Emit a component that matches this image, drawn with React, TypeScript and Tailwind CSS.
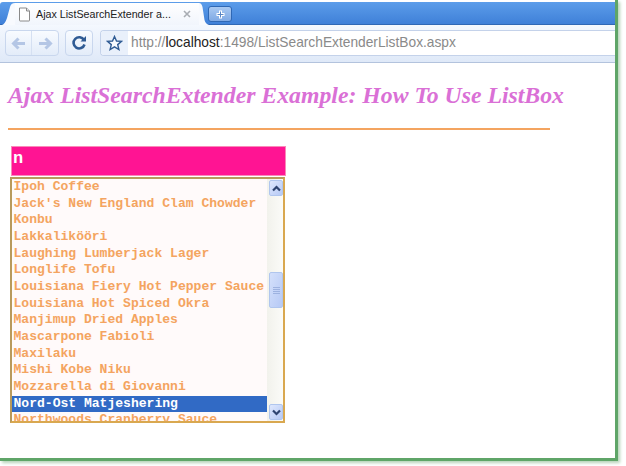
const items = [
  "Ipoh Coffee",
  "Jack's New England Clam Chowder",
  "Konbu",
  "Lakkalikööri",
  "Laughing Lumberjack Lager",
  "Longlife Tofu",
  "Louisiana Fiery Hot Pepper Sauce",
  "Louisiana Hot Spiced Okra",
  "Manjimup Dried Apples",
  "Mascarpone Fabioli",
  "Maxilaku",
  "Mishi Kobe Niku",
  "Mozzarella di Giovanni",
  "Nord-Ost Matjeshering",
  "Northwoods Cranberry Sauce",
];

function Chevron({ up }: { up?: boolean }) {
  return (
    <svg width="9" height="7" viewBox="0 0 9 7" fill="none">
      <path d={up ? "M1 5.5 L4.5 2 L8 5.5" : "M1 1.5 L4.5 5 L8 1.5"} stroke="#2f4470" strokeWidth="2.2" />
    </svg>
  );
}

function ScrollBtn({ up }: { up?: boolean }) {
  return (
    <div className="h-[16px] w-[14px] flex items-center justify-center rounded-[2px] border border-[#b0c6ee] bg-gradient-to-br from-[#dfe8fd] to-[#b6c9f5]">
      <Chevron up={up} />
    </div>
  );
}

export default function App() {
  return (
    <div className="w-[626px] h-[466px] bg-white overflow-hidden font-['Liberation_Sans',sans-serif]">
      <div className="w-[618px] h-[461px] border-r-[3px] border-b-[3px] border-[#5fa568] flex flex-col bg-white shadow-[2px_2px_3px_#b5d3b8]">
        {/* Tab strip */}
        <div className="h-[25px] shrink-0 pt-[2px] bg-white">
          <div className="h-[23px] bg-gradient-to-b from-[#5c9dea] to-[#3f80d8] border-b border-[#2f68b5] flex items-end pl-[2px] rounded-tl-[3px]">
            <svg width="13" height="22" viewBox="0 0 13 22" className="shrink-0 -mb-px">
              <path d="M0 22 Q3 21 5 15 L8 4 Q9 0 13 0 V22 Z" fill="#f8fafe" />
            </svg>
            <div className="w-[184px] h-[22px] bg-gradient-to-b from-white to-[#f1f5fc] flex items-center pl-[3px] pr-[8px] -mb-px">
              <svg width="13" height="15" viewBox="0 0 13 15" fill="none" className="shrink-0">
                <path d="M1.5 1 H8.5 L11.5 4 V13.5 Q11.5 14 11 14 H2 Q1.5 14 1.5 13.5 Z" fill="#fff" stroke="#8a8a8a" />
                <path d="M8.5 1 V4 H11.5" stroke="#8a8a8a" fill="#e8e8e8" />
              </svg>
              <span className="ml-[5px] text-[10.7px] leading-none text-[#222] whitespace-nowrap">Ajax ListSearchExtender a...</span>
              <svg width="8" height="8" viewBox="0 0 8 8" className="ml-auto shrink-0">
                <path d="M1 1 L7 7 M7 1 L1 7" stroke="#a9adb3" strokeWidth="1.6" />
              </svg>
            </div>
            <svg width="10" height="22" viewBox="0 0 10 22" className="shrink-0 -mb-px">
              <path d="M0 0 Q2.5 0 3.5 4 L5.5 17 Q6.5 21 10 22 H0 Z" fill="#f8fafe" />
            </svg>
            <div className="-ml-[1px] mb-[2px] w-[24px] h-[16px] rounded-[3px] bg-gradient-to-b from-[#a9c9f2] to-[#7fa9e4] border border-[#2f68b5] flex items-center justify-center">
              <svg width="11" height="11" viewBox="0 0 11 11">
                <path d="M5.5 1.5 V9.5 M1.5 5.5 H9.5" stroke="#fff" strokeWidth="3" />
                <path d="M5.5 2.5 V8.5 M2.5 5.5 H8.5" stroke="#5a86c4" strokeWidth="1" />
              </svg>
            </div>
          </div>
        </div>

        {/* Toolbar */}
        <div className="h-[38px] shrink-0 pb-px bg-gradient-to-b from-[#f4f8fe] to-[#dfe9f8] border-b border-[#b3c3dd] flex items-center pl-[5px]">
          <div className="w-[54px] h-[26px] rounded-[4px] border border-[#c9d7ee] bg-gradient-to-b from-[#f8fbff] to-[#e3ecf9] flex items-center">
            <div className="w-[26px] h-full flex items-center justify-center border-r border-[#d5e0f2]">
              <svg width="15" height="13" viewBox="0 0 15 13" fill="none">
                <path d="M14 6.5 H3 M7.5 1.5 L2.5 6.5 L7.5 11.5" stroke="#b4c6e5" strokeWidth="3" />
              </svg>
            </div>
            <div className="flex-1 h-full flex items-center justify-center">
              <svg width="15" height="13" viewBox="0 0 15 13" fill="none">
                <path d="M1 6.5 H12 M7.5 1.5 L12.5 6.5 L7.5 11.5" stroke="#b4c6e5" strokeWidth="3" />
              </svg>
            </div>
          </div>
          <div className="ml-[6px] w-[28px] h-[26px] rounded-[4px] border border-[#c9d7ee] bg-gradient-to-b from-[#f8fbff] to-[#e3ecf9] flex items-center justify-center">
            <svg width="16" height="16" viewBox="0 0 16 16" fill="none">
              <path d="M13 5 A5.6 5.6 0 1 0 13.5 9.5" stroke="#2f5b94" strokeWidth="2.6" />
              <path d="M9.5 6.5 H15 V1 Z" fill="#2f5b94" />
            </svg>
          </div>
          <div className="ml-[7px] flex-1 h-[26px] rounded-l-[4px] border border-r-0 border-[#c4d2ea] bg-white flex items-center overflow-hidden">
            <div className="w-[27px] h-full bg-[#e9f0fb] flex items-center justify-center shrink-0">
              <svg width="17" height="16" viewBox="0 0 17 16" fill="none">
                <path d="M8.5 1.5 L10.5 6 L15.5 6.4 L11.7 9.6 L12.9 14.5 L8.5 11.9 L4.1 14.5 L5.3 9.6 L1.5 6.4 L6.5 6 Z" stroke="#2f5b94" strokeWidth="1.4" fill="#f7faff" />
              </svg>
            </div>
            <span className="ml-[3px] text-[13.75px] leading-none text-[#8a8a8a] whitespace-nowrap">
              http://<span className="text-[#222]">localhost</span>:1498/ListSearchExtenderListBox.aspx
            </span>
          </div>
        </div>

        {/* Page */}
        <div className="flex-1 min-h-0 pl-[8px] pt-[19px] overflow-hidden">
          <h1 className="font-['Liberation_Serif',serif] italic font-bold text-[23.75px] leading-[27px] text-[#da70d6] whitespace-nowrap">
            Ajax ListSearchExtender Example: How To Use ListBox
          </h1>
          <div className="mt-[19px] w-[542px] h-[2px] bg-[#f4a460]" />
          <div className="ml-[3px] mt-[16px] w-[275px] h-[30px] bg-[#ff1493] border border-[#f98ab8] pl-[1px] pt-[2px] font-['Liberation_Mono',monospace] font-bold text-[17px] leading-[19px] text-white">
            n
          </div>
          <div className="ml-[2px] mt-px w-[275px] h-[246px] border-2 border-[#d9a850] border-t-[#b89a5c] border-l-[#b89a5c] bg-[#fffafa] flex overflow-hidden">
            <div className="flex-1 min-w-0 overflow-hidden font-['Liberation_Mono',monospace] font-bold text-[13.05px] text-[#f4a460]">
              {items.map((t, i) => (
                <div
                  key={t}
                  className={
                    i === 13
                      ? "h-[16.67px] leading-[16.67px] pl-[1.5px] whitespace-nowrap bg-[#316ac5] text-white"
                      : "h-[16.67px] leading-[16.67px] pl-[1.5px] whitespace-nowrap"
                  }
                >
                  {t}
                </div>
              ))}
            </div>
            <div className="w-[16px] shrink-0 bg-gradient-to-r from-[#f2f2ec] to-[#fbfbf8] flex flex-col items-end py-px">
              <ScrollBtn up />
              <div className="flex-1 w-full flex flex-col items-end pt-[76px]">
                <div className="w-[14px] h-[36px] rounded-[2px] border border-[#b0c6ee] bg-gradient-to-br from-[#d4e0fb] to-[#b6c9f5] flex flex-col items-center justify-center gap-px">
                  <div className="w-[7px] h-px bg-[#9db2e0]" />
                  <div className="w-[7px] h-px bg-[#9db2e0]" />
                  <div className="w-[7px] h-px bg-[#9db2e0]" />
                  <div className="w-[7px] h-px bg-[#9db2e0]" />
                </div>
              </div>
              <ScrollBtn />
            </div>
          </div>
        </div>
      </div>
    </div>
  );
}
